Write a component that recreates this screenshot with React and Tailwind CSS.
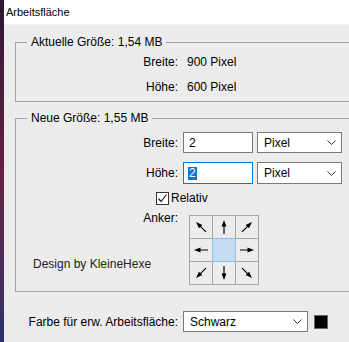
import React from "react";

const arrows = [
  "-rotate-45",
  "rotate-0",
  "rotate-45",
  "-rotate-90",
  null,
  "rotate-90",
  "rotate-[-135deg]",
  "rotate-180",
  "rotate-[135deg]",
];

const Chevron = () => (
  <svg width="9" height="5" viewBox="0 0 9 5" className="shrink-0">
    <polyline points="0.5,0.5 4.5,4.5 8.5,0.5" fill="none" stroke="#333" strokeWidth="1" />
  </svg>
);

const Select = ({ value, className }) => (
  <div
    className={`flex items-center justify-between border border-[#7a7a7a] bg-white pl-[6px] pr-[5px] ${className}`}
  >
    <span>{value}</span>
    <Chevron />
  </div>
);

const Arrow = ({ cls }) => (
  <svg width="16" height="16" viewBox="0 0 16 16" className={cls}>
    <line x1="8" y1="15" x2="8" y2="5" stroke="#000" strokeWidth="1.2" />
    <polygon points="8,1 5.6,7.5 10.4,7.5" fill="#000" />
  </svg>
);

export default function App() {
  return (
    <div className="flex w-[349px] h-[342px] overflow-hidden font-['Liberation_Sans',Arial,sans-serif] text-[12px] leading-[14px] text-black">
      {/* desktop behind the dialog */}
      <div className="w-[4px] shrink-0 bg-gradient-to-b from-[#2e1736] via-[#6a1f3e] to-[#2b2f6e]" />

      <div className="flex-1 flex flex-col bg-[#ececec]">
        {/* Title bar */}
        <div className="h-[25px] shrink-0 bg-white flex items-center pl-[2px] text-[11px] border-b border-[#f4f4f4]">
          Arbeitsfläche
        </div>

        {/* Aktuelle Größe */}
        <fieldset className="mt-[10px] ml-[11px] w-[345px] border border-[#a3a3a3] pb-[2px]">
          <legend className="ml-[11px] px-[4px] leading-[14px]">Aktuelle Größe: 1,54 MB</legend>
          <div className="flex h-[25px] items-center">
            <span className="w-[162px] text-right">Breite:</span>
            <span className="ml-[9px]">900 Pixel</span>
          </div>
          <div className="flex h-[25px] items-center">
            <span className="w-[162px] text-right">Höhe:</span>
            <span className="ml-[9px]">600 Pixel</span>
          </div>
        </fieldset>

        {/* Neue Größe */}
        <fieldset className="mt-[9px] ml-[11px] w-[345px] border border-[#a3a3a3] pb-[6px]">
          <legend className="ml-[11px] px-[4px] leading-[14px]">Neue Größe: 1,55 MB</legend>

          <div className="mt-[7px] flex h-[21px] items-center">
            <span className="w-[162px] text-right">Breite:</span>
            <div className="ml-[5px] w-[70px] h-[21px] border border-[#7a7a7a] bg-white pl-[5px] flex items-center">2</div>
            <Select value="Pixel" className="ml-[4px] w-[85px] h-[21px]" />
          </div>

          <div className="mt-[9px] flex h-[22px] items-center">
            <span className="w-[162px] text-right">Höhe:</span>
            <div className="ml-[5px] w-[70px] h-[22px] border border-[#0078d7] bg-white pl-[4px] flex items-center">
              <span className="bg-[#0078d7] text-white px-[1px] leading-[13px]">2</span>
            </div>
            <Select value="Pixel" className="ml-[4px] w-[85px] h-[22px]" />
          </div>

          <div className="mt-[6px] flex h-[16px] items-center pl-[140px]">
            <div className="w-[13px] h-[13px] border border-[#333] bg-white flex items-center justify-center">
              <svg width="11" height="11" viewBox="0 0 11 11">
                <polyline points="1.5,5.5 4,8.5 9.5,1.5" fill="none" stroke="#222" strokeWidth="1.2" />
              </svg>
            </div>
            <span className="ml-[2px]">Relativ</span>
          </div>

          <div className="mt-[5px] flex">
            <div className="w-[162px] flex flex-col pb-[14px]">
              <span className="text-right">Anker:</span>
              <span className="mt-auto ml-[17px] text-[#222]">Design by KleineHexe</span>
            </div>
            <div className="mt-[4px] ml-[11px] grid grid-cols-3 gap-px p-px bg-[#a6a6a6] w-[70px] h-[70px]">
              {arrows.map((cls, i) =>
                cls ? (
                  <div key={i} className="bg-[#ececec] flex items-center justify-center">
                    <Arrow cls={cls} />
                  </div>
                ) : (
                  <div key={i} className="bg-[#c4dcf3] outline outline-1 outline-[#8ec2ef]" />
                )
              )}
            </div>
          </div>
        </fieldset>

        {/* Farbe */}
        <div className="mt-[19px] flex h-[21px] items-center">
          <span className="w-[174px] text-right">Farbe für erw. Arbeitsfläche:</span>
          <Select value="Schwarz" className="ml-[5px] w-[125px] h-[21px]" />
          <div className="ml-[6px] w-[14px] h-[14px] bg-black border border-[#666]" />
        </div>
      </div>
    </div>
  );
}
